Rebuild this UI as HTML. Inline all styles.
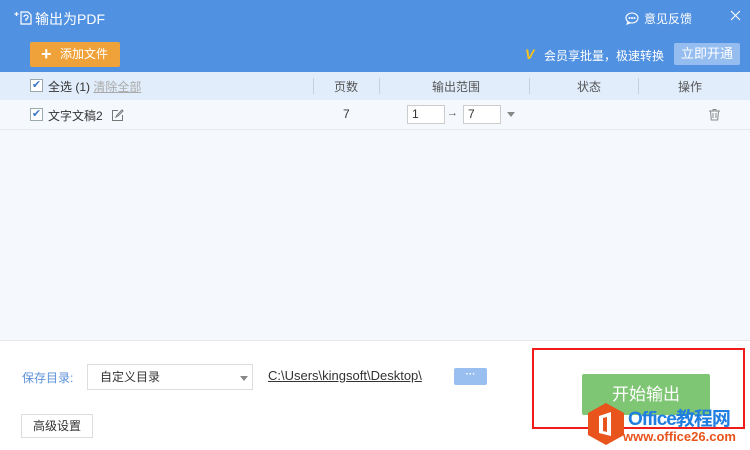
<!DOCTYPE html>
<html><head><meta charset="utf-8"><style>
*{margin:0;padding:0;box-sizing:border-box}
body{width:750px;height:450px;overflow:hidden;background:#fff;font-family:"Liberation Sans","Noto Sans CJK SC",sans-serif;font-size:12px;color:#333;position:relative}
.a{position:absolute}
</style></head><body>
<div class="a" style="left:0;top:0;width:750px;height:72px;background:#5191e1"></div>
<svg class="a" style="left:13px;top:10px" width="20" height="16" viewBox="0 0 20 16" fill="none" stroke="#fff" stroke-width="1.2"><path d="M1.5 4h4M3.5 2v4"/><path d="M8 2h7l3 3v9H8z"/><path d="M11 7a2 2 0 1 1 2 2v2"/></svg>
<div class="a" style="left:35px;top:9px;color:#fff;font-size:14px">输出为PDF</div>
<svg class="a" style="left:625px;top:12px" width="14" height="13" viewBox="0 0 14 13" fill="none" stroke="#fff" stroke-width="1.1"><ellipse cx="7" cy="6" rx="6" ry="5"/><path d="M3 10l-1 2 3-1"/><circle cx="4.5" cy="6" r=".5" fill="#fff"/><circle cx="7" cy="6" r=".5" fill="#fff"/><circle cx="9.5" cy="6" r=".5" fill="#fff"/></svg>
<div class="a" style="left:644px;top:10px;color:#fff;font-size:12px">意见反馈</div>
<svg class="a" style="left:730px;top:10px" width="11" height="11" viewBox="0 0 11 11" stroke="#fff" stroke-width="1.1"><path d="M1 1l9 9M10 1l-9 9"/></svg>
<div class="a" style="left:30px;top:42px;width:90px;height:25px;background:#efa23a;border-radius:2px;color:#fff;font-size:12px;line-height:25px;padding-left:30px">添加文件</div>
<div class="a" style="left:41px;top:46px;color:#fff;font-size:18px;font-weight:bold;line-height:17px">+</div>
<div class="a" style="left:525px;top:46px;color:#f7c21a;font-size:14px;font-weight:bold;font-style:italic">V</div>
<div class="a" style="left:544px;top:47px;color:#fff;font-size:12px">会员享批量，极速转换</div>
<div class="a" style="left:674px;top:43px;width:66px;height:22px;background:#95bdf0;border-radius:2px;color:#fff;font-size:13px;line-height:22px;text-align:center">立即开通</div>
<div class="a" style="left:0;top:72px;width:750px;height:28px;background:#e1edfb"></div>
<div class="a" style="left:0;top:100px;width:750px;height:240px;background:#f5f8fd"></div>
<div class="a" style="left:0;top:129px;width:750px;height:1px;background:#e6e9ee"></div>
<div class="a" style="left:0;top:340px;width:750px;height:1px;background:#e8e8e8"></div>
<div class="a" style="left:313px;top:78px;width:1px;height:16px;background:#c8d2dd"></div>
<div class="a" style="left:529px;top:78px;width:1px;height:16px;background:#c8d2dd"></div>
<div class="a" style="left:638px;top:78px;width:1px;height:16px;background:#c8d2dd"></div>
<div class="a" style="left:379px;top:78px;width:1px;height:16px;background:#c8d2dd"></div>
<div class="a" style="left:30px;top:79px;width:13px;height:13px;border:1px solid #9aa;background:#fff;color:#3a78c8;font-size:11px;line-height:11px;text-align:center">✔</div>
<div class="a" style="left:48px;top:78px;color:#333">全选 (1) <span style="color:#aaa;text-decoration:underline">清除全部</span></div>
<div class="a" style="left:334px;top:78px;color:#555">页数</div>
<div class="a" style="left:432px;top:78px;color:#555">输出范围</div>
<div class="a" style="left:577px;top:78px;color:#555">状态</div>
<div class="a" style="left:678px;top:78px;color:#555">操作</div>
<div class="a" style="left:30px;top:108px;width:13px;height:13px;border:1px solid #9aa;background:#fff;color:#3a78c8;font-size:11px;line-height:11px;text-align:center">✔</div>
<div class="a" style="left:48px;top:107px;color:#333">文字文稿2</div>
<svg class="a" style="left:111px;top:109px" width="13" height="13" viewBox="0 0 13 13" fill="none" stroke="#777" stroke-width="1"><path d="M7 1.5H1.5v10h10V6"/><path d="M5 8l1-2 5-5 1 1-5 5z"/></svg>
<div class="a" style="left:343px;top:107px;color:#333">7</div>
<div class="a" style="left:407px;top:105px;width:38px;height:19px;border:1px solid #ccc;background:#fff;padding-left:4px;line-height:17px;color:#333">1</div>
<div class="a" style="left:447px;top:107px;color:#555;font-size:11px">→</div>
<div class="a" style="left:463px;top:105px;width:38px;height:19px;border:1px solid #ccc;background:#fff;padding-left:4px;line-height:17px;color:#333">7</div>
<div class="a" style="left:507px;top:112px;border:4px solid transparent;border-top:5px solid #888"></div>
<svg class="a" style="left:708px;top:108px" width="13" height="13" viewBox="0 0 13 13" fill="none" stroke="#888" stroke-width="1"><path d="M1 3h11M5 3V1.5h3V3M2.5 3l.8 9h6.4l.8-9M5 5v5M8 5v5"/></svg>
<div class="a" style="left:22px;top:369px;color:#5b92da">保存目录:</div>
<div class="a" style="left:87px;top:364px;width:166px;height:26px;border:1px solid #ddd;background:#fff;padding-left:12px;line-height:24px">自定义目录</div>
<div class="a" style="left:240px;top:376px;border:4px solid transparent;border-top:5px solid #888"></div>
<div class="a" style="left:268px;top:368px;color:#333;font-size:13px;text-decoration:underline">C:\Users\kingsoft\Desktop\</div>
<div class="a" style="left:454px;top:368px;width:33px;height:17px;background:#99bff0;border-radius:2px;color:#fff;font-size:10px;line-height:14px;text-align:center;font-weight:bold">···</div>
<div class="a" style="left:21px;top:414px;width:72px;height:24px;border:1px solid #ddd;background:#fff;line-height:22px;text-align:center;color:#333">高级设置</div>
<div class="a" style="left:532px;top:348px;width:213px;height:81px;border:2px solid #f01c1c"></div>
<div class="a" style="left:582px;top:374px;width:128px;height:41px;background:#7fc674;border-radius:2px;color:#fff;font-size:17px;line-height:41px;text-align:center">开始输出</div>
<svg class="a" style="left:586px;top:402px" width="40" height="44" viewBox="0 0 40 44"><path d="M20 1l18 10v22L20 43 2 33V11z" fill="#e8541b"/><path d="M13 14l12-4v24l-12-3z" fill="#fff"/><path d="M17 16l4-1v15l-4-1z" fill="#e8541b"/></svg>
<div class="a" style="left:628px;top:404px;color:#1f7ee0;font-size:19px;font-weight:bold;letter-spacing:-1px">Office教程网</div>
<div class="a" style="left:623px;top:429px;color:#e8541b;font-size:13px;font-weight:bold">www.office26.com</div>
</body></html>
